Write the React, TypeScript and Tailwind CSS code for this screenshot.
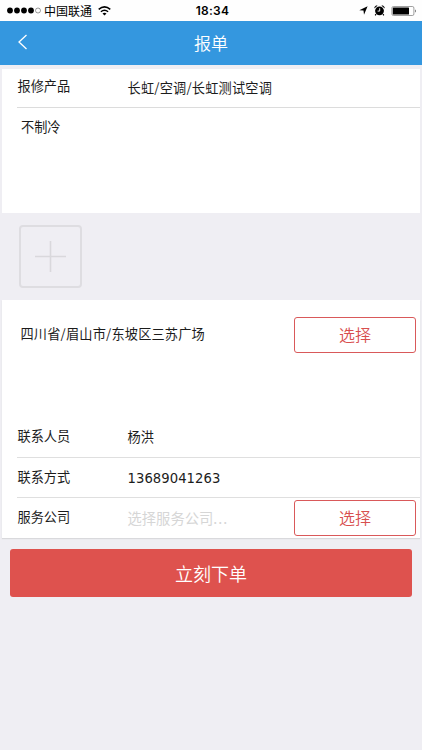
import React from "react";

function StatusBar() {
    return (
        <div className="flex h-[21px] items-center bg-[#fefefe] px-[7px] text-black">
            <div className="flex flex-1 items-center">
                <svg width="35" height="7" viewBox="0 0 35 7" className="shrink-0">
                    {[3, 10, 17, 24].map(cx => <circle key={cx} cx={cx} cy="3.5" r="2.9" />)}
                    <circle cx="31" cy="3.5" r="2.5" fill="none" stroke="#555" strokeWidth="0.6" />
                </svg>
                <span className="ml-[2px] w-[49px] whitespace-nowrap text-[12px] leading-[20px]">中国联通</span>
                <svg width="13" height="10" viewBox="0 0 13 10" className="ml-[4.5px] shrink-0" fill="none" stroke="#000" strokeWidth="1.5">
                    <path d="M0.7 3.4 Q6.5 -1.6 12.3 3.4" />
                    <path d="M2.9 5.8 Q6.5 2.7 10.1 5.8" />
                    <path d="M4.5 7.5 Q6.5 5.8 8.5 7.5 L6.5 9.6 Z" fill="#000" stroke="none" />
                </svg>
            </div>
            <span className="pl-[3px] font-[Inter] text-[12px] font-semibold leading-[20px] tracking-[0.3px]">18:34</span>
            <div className="flex flex-1 items-center justify-end">
                <svg width="9" height="9" viewBox="0 0 9 9" className="mr-[6px]">
                    <path d="M8.6 0.3 L5 8.7 L4.5 4.6 L0.3 4.2 Z" />
                </svg>
                <svg width="11" height="11" viewBox="0 0 11 11" className="mr-[6px]">
                    <path d="M0.5 3 Q0.7 0.8 3.2 0.6 Z M10.5 3 Q10.3 0.8 7.8 0.6 Z" stroke="#000" strokeWidth="0.5" />
                    <circle cx="5.5" cy="5.8" r="4.4" />
                    <path d="M2 9.2 L1.2 10.4 M9 9.2 L9.8 10.4" stroke="#000" strokeWidth="1.2" />
                    <path d="M5.7 3.2 V6.1 H3.6" fill="none" stroke="#fff" strokeWidth="0.9" />
                </svg>
                <svg width="26" height="10" viewBox="0 0 26 10" className="-mr-[2px]">
                    <rect x="0.9" y="0.5" width="22" height="9" rx="1.5" fill="none" stroke="#777" strokeWidth="0.7" />
                    <rect x="1.8" y="1.4" width="16.2" height="7.2" rx="0.5" />
                    <path d="M24 3.2 Q25.6 5 24 6.8 Z" fill="#333" />
                </svg>
            </div>
        </div>
    );
}

function SelectButton() {
    return (
        <button type="button" className="h-9 w-[122px] shrink-0 rounded-[3px] border border-[#d9595a] bg-white pb-[2px] text-[16px] leading-[32px] font-[350] text-[#d84f4f]">
            选择
        </button>
    );
}

function Row({ label, children }: { label: string; children: React.ReactNode }) {
    return (
        <div className="flex h-full">
            <span className="w-[110px] shrink-0 pl-[0.5px] pt-[9px] text-[13.2px] leading-5">{label}</span>
            {children}
        </div>
    );
}

export default function App() {
    return (
        <div className="flex h-[750px] w-full flex-col overflow-hidden bg-[#efeef3] font-['Noto_Sans_CJK_SC',sans-serif] text-[#1c1c1c]">
            <StatusBar />
            <header className="flex h-[44px] shrink-0 items-center bg-[#3497df] px-[17px] text-white">
                <svg width="11" height="16" viewBox="0 0 11 16" className="-mt-[2px]" fill="none" stroke="#fff" strokeWidth="1.3">
                    <path d="M9.5 1 L2 8 L9.5 15" />
                </svg>
                <h1 className="flex-1 pr-[11px] text-center text-[17px] font-[350]">报单</h1>
            </header>

            <section className="mx-[2px] mt-[4px] h-[144px] shrink-0 bg-white">
                <div className="ml-[15px] h-[39px] border-b border-[#dcdcdc]">
                    <div className="flex">
                        <span className="w-[110px] shrink-0 pl-[0.5px] pt-[7px] text-[13.2px] leading-5">报修产品</span>
                        <span className="whitespace-nowrap pt-[9px] pl-[0.5px] text-[13.2px] leading-5 tracking-[0.2px]">长虹/空调/长虹测试空调</span>
                    </div>
                </div>
                <p className="pl-[19px] pt-[9px] text-[13.2px] leading-5">不制冷</p>
            </section>

            <div className="flex h-[87px] shrink-0 pl-[19px] pt-[12px]">
                <button type="button" className="flex h-[63px] w-[63px] items-center justify-center rounded-[4px] border-2 border-[#dedde1]" aria-label="添加图片">
                    <svg width="31" height="31" viewBox="0 0 31 31" stroke="#d9d8dc" strokeWidth="1.6">
                        <path d="M15.5 0 V31 M0 15.5 H31" />
                    </svg>
                </button>
            </div>

            <section className="mx-[2px] h-[238px] shrink-0 bg-white shadow-[0_1px_1px_#d9d9dc]">
                <div className="flex h-[117px] justify-between pl-[18.5px] pr-[4px] pt-[17px]">
                    <span className="whitespace-nowrap pt-[7px] text-[13.2px] leading-5 tracking-[0.18px]">四川省/眉山市/东坡区三苏广场</span>
                    <SelectButton />
                </div>
                <div className="ml-[15px] h-[41px] border-b border-[#dfdfdf]">
                    <Row label="联系人员">
                        <span className="pt-[10px] pl-[0.5px] text-[13.2px] leading-5">杨洪</span>
                    </Row>
                </div>
                <div className="ml-[15px] h-[40px] border-b border-[#dfdfdf]">
                    <Row label="联系方式">
                        <span className="pt-[11px] pl-[0.5px] font-['DejaVu_Sans'] text-[13.2px] leading-5 tracking-[0.05px]">13689041263</span>
                    </Row>
                </div>
                <div className="ml-[15px] h-[40px]">
                    <Row label="服务公司">
                        <span className="flex-1 pt-[10px] pl-[0.5px] text-[14.3px] leading-5 text-[#d6d6d6]">
                            选择服务公司<span className="tracking-[1px]">...</span>
                        </span>
                        <div className="pr-[4px] pt-[2px]">
                            <SelectButton />
                        </div>
                    </Row>
                </div>
            </section>

            <button type="button" className="mx-[10px] mt-[11px] h-[48px] shrink-0 rounded-[3px] bg-[#de524e] text-[18px] font-[350] text-white">
                立刻下单
            </button>
        </div>
    );
}
